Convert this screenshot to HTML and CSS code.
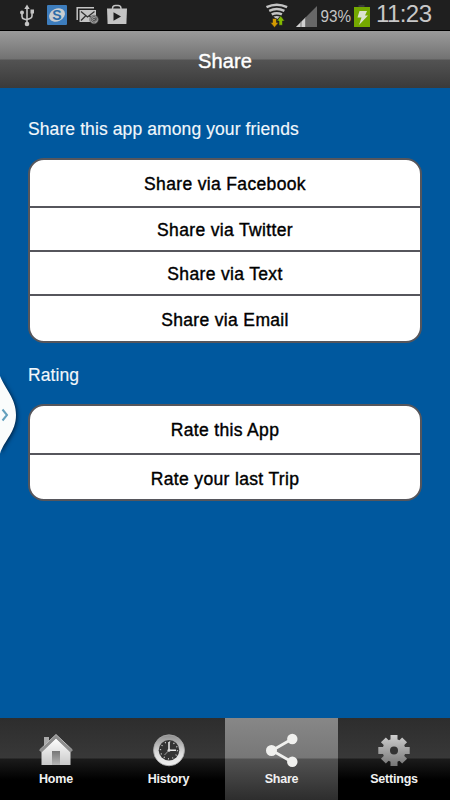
FILE: index.html
```html
<!DOCTYPE html>
<html lang="en">
<head>
<meta charset="utf-8">
<title>Share</title>
<link rel="stylesheet" href="styles.css">
</head>
<body>
<div class="phone">
  <div class="status">
    <svg class="status-left" width="150" height="30" viewBox="0 0 150 30">
      <g stroke="#c4c4c4" fill="none" stroke-width="1.6">
        <path d="M27 8V24M22 13v3.500q0 2 2 2.500l3 1M32 12v4q0 2-2 2.500l-3 1"/>
      </g>
      <g fill="#c4c4c4"><path d="M27 4.500l2.700 4.500h-5.400zM30.500 9.500h3.500v4h-3.500z"/><circle cx="22" cy="12.500" r="2"/><circle cx="27" cy="24" r="2.300"/></g>
      <rect x="47" y="5" width="20" height="20" rx="1" fill="#3d7dbd"/>
      <ellipse cx="57" cy="15" rx="8.300" ry="6.300" transform="rotate(-25 57 15)" fill="#c9cdd0"/>
      <text class="badge-s" x="57" y="19.800" text-anchor="middle">S</text>
      <path d="M77.200 20V7.800H94" fill="none" stroke="#c4c4c4" stroke-width="1.500"/>
      <rect x="79.500" y="10" width="16.500" height="12" fill="#c4c4c4"/>
      <path d="M81 11.500l6.500 5.500 7-5.500M81 20.500l4.500-4.500M94 20.500l-4.500-4.500" fill="none" stroke="#303030" stroke-width="1.300"/>
      <circle cx="94" cy="19.500" r="4.300" fill="#a2a2a2" stroke="#555" stroke-width=".6"/>
      <circle cx="94" cy="19.500" r="1.300" fill="none" stroke="#333" stroke-width=".7"/><path d="M95.300 18v2.200q1.500.8 1.500-1a2.800 2.800 0 1 0-1.300 2.500" fill="none" stroke="#333" stroke-width=".6"/>
      <path d="M112.500 10V8.500q0-3 3-3h2.500q3 0 3 3V10" fill="none" stroke="#c4c4c4" stroke-width="1.400"/>
      <path d="M107 8.500h20l-.6 15.500h-18.800z" fill="#c4c4c4"/><path d="M113.500 12.300v8.500l7.500-4.300z" fill="#1f1f1f"/>
    </svg>
    <svg class="status-right" width="200" height="30" viewBox="0 0 200 30">
      <g fill="none" stroke="#c4c4c4" stroke-width="2.500">
        <path d="M16.500 7.200q10.300-4.800 20.600 0M19.200 10.900q7.600-3.600 15.200 0M21.700 14.400q5.100-2.500 10.200 0"/>
      </g>
      <path d="M23.500 16.600q3.300-1.400 6.600 0l-3.300 3z" fill="#c4c4c4"/>
      <path d="M22.500 18.500h4v4h2.200l-4.200 5-4.200-5h2.200z" fill="#d49a00" stroke="#222" stroke-width=".6"/>
      <path d="M29 25.300h3.500v-4.300h2.200l-4-5.300-3.900 5.300h2.200z" fill="#83b900" stroke="#222" stroke-width=".6"/>
      <path d="M67 6v21H46z" fill="#676767"/><path d="M56 17v10H46z" fill="#d0d0d0"/><path d="M51 21v6M55.500 17v10" stroke="#555" stroke-width=".7"/>
      <text class="battery-text" x="70.500" y="22" textLength="30.500" lengthAdjust="spacingAndGlyphs">93%</text>
      <path d="M108.500 5h6v2.500h-6z" fill="#3a3a3a"/><path d="M104 7h16v20h-16z" fill="#75a900"/>
      <path d="M109.500 11h7.500l-2 4.500h3l-9 9.500 2.500-7.500h-4z" fill="#dce3cf"/>
      <text class="clock" x="126" y="22" textLength="56">11:23</text>
    </svg>
  </div>
  <header class="header">Share</header>
  <main class="content">
    <h2 class="label">Share this app among your friends</h2>
    <div class="list share-list">
      <div class="row">Share via Facebook</div>
      <div class="row">Share via Twitter</div>
      <div class="row">Share via Text</div>
      <div class="row">Share via Email</div>
    </div>
    <h2 class="label rating">Rating</h2>
    <div class="list rate-list">
      <div class="row">Rate this App</div>
      <div class="row">Rate your last Trip</div>
    </div>
    <svg class="handle" width="24" height="90" viewBox="0 0 24 90">
      <path d="M-1 3C3 17 16 27 16 45S3 71-1 87z" fill="#fafcfc"/>
      <path d="M2.500 39.500l4.500 5.500-4.500 5.500" fill="none" stroke="#64a0bd" stroke-width="2"/>
    </svg>
  </main>
  <nav class="tabs">
    <div class="tab">
      <svg width="36" height="34" viewBox="0 0 36 34">
        <defs><linearGradient id="home" x2="0" y2="1"><stop stop-color="#fff"/><stop offset="1" stop-color="#c9c9c9"/></linearGradient><linearGradient id="door" x2="0" y2="1"><stop stop-color="#777"/><stop offset="1" stop-color="#b5b5b5"/></linearGradient></defs>
        <path d="M6 4h5v9H6z" fill="#aaa"/><path d="M18 5l14.500 13.500V32h-29V18.500z" fill="url(#home)"/>
        <path d="M2.500 18.500L18 3.500l15.500 15" fill="none" stroke="#8e8e8e" stroke-width="3"/><path d="M1.500 17L18 1.500 34.500 17" fill="none" stroke="#bbb" stroke-width="1"/>
        <path d="M14 18h8v14h-8z" fill="url(#door)"/>
      </svg><span>Home</span>
    </div>
    <div class="tab">
      <svg width="36" height="34" viewBox="0 0 36 34">
        <defs><linearGradient id="rim" x2="0" y2="1"><stop stop-color="#8d8d8d"/><stop offset=".6" stop-color="#ddd"/><stop offset="1" stop-color="#f1f1f1"/></linearGradient></defs>
        <circle cx="18" cy="17.300" r="15.500" fill="url(#rim)" stroke="#aaa" stroke-width=".8"/>
        <circle cx="18" cy="17.300" r="10.300" fill="#343434"/>
        <circle cx="18" cy="17.300" r="8.500" fill="none" stroke="#d7d7d7" stroke-width="1.300" stroke-dasharray="1 3.451"/>
        <path d="M18 9v8.300h7" fill="none" stroke="#e5e5e5" stroke-width="1.600"/><path d="M18 17.300L13.500 22" stroke="#aaa" stroke-width=".9"/><circle cx="18" cy="17.300" r="1.500" fill="#ddd"/>
      </svg><span>History</span>
    </div>
    <div class="tab active">
      <svg width="36" height="34" viewBox="0 0 36 34">
        <path d="M28 6L8 17.500 28 29" fill="none" stroke="#f0f0ee" stroke-width="2.800"/><g fill="#f0f0ee"><circle cx="28.300" cy="6" r="5.200"/><circle cx="7.500" cy="17.500" r="5.500"/><circle cx="28.300" cy="28.800" r="5.200"/></g>
      </svg><span>Share</span>
    </div>
    <div class="tab">
      <svg width="36" height="34" viewBox="0 0 36 34">
        <defs><linearGradient id="gear" gradientUnits="userSpaceOnUse" x1="0" y1="1" x2="0" y2="33"><stop stop-color="#d2d2d2"/><stop offset="1" stop-color="#757575"/></linearGradient></defs>
        <circle cx="18" cy="17.500" r="11.500" fill="url(#gear)"/>
        <path d="M18 2V33M2.300 17.500H33.700M7.400 6.900L28.600 28.100M7.400 28.100L28.600 6.900" fill="none" stroke="url(#gear)" stroke-width="7"/>
        <circle cx="18" cy="17.500" r="4" fill="#333"/>
      </svg><span>Settings</span>
    </div>
  </nav>
</div>
</body>
</html>
```
FILE: styles.css
```css
* { box-sizing: border-box; }
body { margin: 0; font-family: "Liberation Sans", Arial, sans-serif; }
.phone { width: 450px; height: 800px; display: flex; flex-direction: column; background: #00589e; }
.status { height: 31px; flex: none; display: flex; justify-content: space-between; background: #1f1f1f; border-bottom: 1px solid #000; }
.badge-s { font: bold 14px "Liberation Sans", sans-serif; fill: #2c6ba8; }
.battery-text { font-size: 16px; fill: #c4c4c4; }
.clock { font-size: 24px; fill: #c8c8c8; }
.header {
  height: 57px; flex: none; display: flex; align-items: center; justify-content: center;
  padding-top: 3px; color: #fff; font-size: 20px; letter-spacing: .1px;
  -webkit-text-stroke: .4px #fff;
  background: linear-gradient(#9b9b9b 0, #727272 28px, #535353 29px, #3a3a3a 57px);
}
.content { position: relative; flex: 1; padding: 30px 28px 0; }
.label { margin: 0; height: 22px; line-height: 22px; font-size: 17.5px; font-weight: normal; color: #f2f7fb; letter-spacing: .1px; -webkit-text-stroke: .15px #f2f7fb; }
.rating { margin-top: 21px; }
.list { width: 394px; border: 2px solid #56565c; border-radius: 16px; background: #fff; overflow: hidden; display: grid; }
.share-list { margin-top: 18px; height: 185px; grid-template-rows: 48px 44px 44px 1fr; }
.rate-list { margin-top: 18px; height: 97px; grid-template-rows: 49px 1fr; }
.row { display: flex; align-items: center; justify-content: center; padding-top: 3px; border-bottom: 2px solid #56565c; color: #000; font-size: 17.5px; letter-spacing: .34px; -webkit-text-stroke: .4px #000; }
.rate-list .row { padding-top: 1px; }
.row:last-child { border-bottom: 0; }
.rate-list .row:last-child { padding-top: 4px; }
.handle { position: absolute; left: 0; top: 282px; filter: drop-shadow(1px 1px 2px #001e3c); }
.tabs { height: 82px; flex: none; display: grid; grid-template-columns: 112px 113px 113px 112px; background: linear-gradient(#2d2d2d 0, #383838 40px, #1b1b1b 41px, #000 62px); }
.tab { display: flex; flex-direction: column; align-items: center; padding-top: 15px; color: #f1f1f1; font-size: 12.5px; font-weight: bold; letter-spacing: -.2px; line-height: 15px; }
.tab span { margin-top: 5px; }
.active { background: linear-gradient(#878787 0, #777 40px, #525252 41px, #2d2d2d 82px); }
```
